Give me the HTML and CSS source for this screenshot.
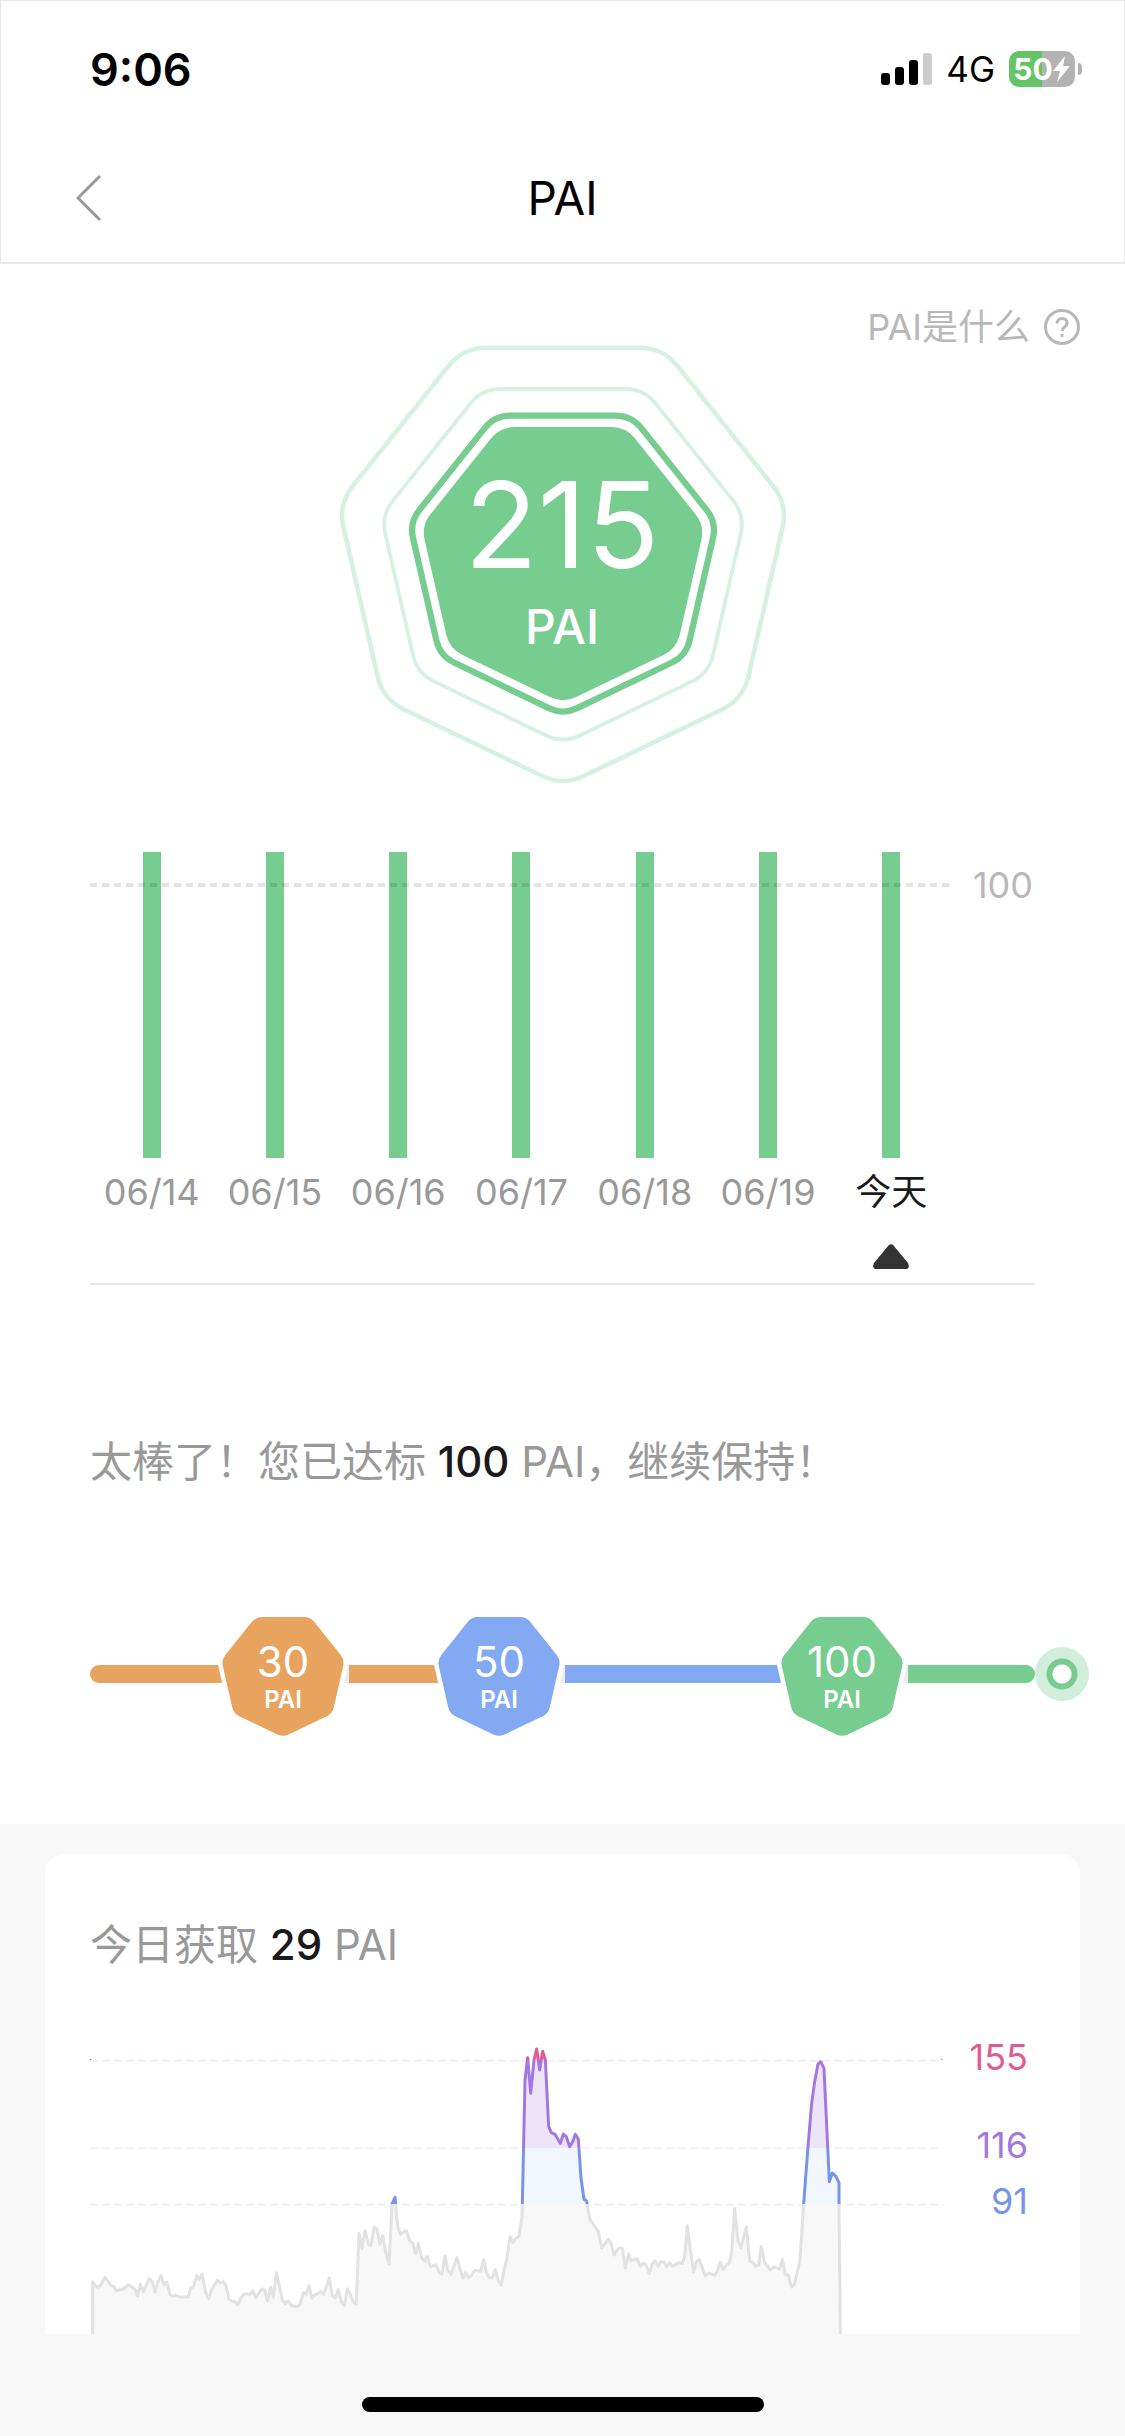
FILE: index.html
```html
<!DOCTYPE html>
<html lang="zh-CN">
<head>
<meta charset="utf-8">
<meta name="viewport" content="width=device-width, initial-scale=1">
<title>PAI</title>
<link rel="stylesheet" href="styles.css">
</head>
<body>
<svg class="defs" aria-hidden="true">
  <defs>
    <path id="hepta" d="M-33.39-90.1H33.39A20.8 20.8 0 0 1 49.62-82.28L91.26-30.07A20.8 20.8 0 0 1 95.27-12.5L80.4 52.6A20.8 20.8 0 0 1 69.17 66.69L9.01 95.66A20.8 20.8 0 0 1-9.01 95.66L-69.17 66.69A20.8 20.8 0 0 1-80.4 52.6L-95.27-12.5A20.8 20.8 0 0 1-91.26-30.07L-49.62-82.28A20.8 20.8 0 0 1-33.39-90.1Z"/>
  </defs>
</svg>

<header class="header">
  <div class="status">
    <span class="status-time">9:06</span>
    <div class="status-icons">
      <svg class="signal" viewBox="0 0 51 32" aria-hidden="true">
        <rect x="0" y="20" width="9" height="12" rx="3"/>
        <rect x="14" y="14" width="9" height="18" rx="3"/>
        <rect x="28" y="7" width="9" height="25" rx="3"/>
        <rect class="signal-off" x="42" y="0" width="9" height="32" rx="3"/>
      </svg>
      <span class="network">4G</span>
      <div class="battery">
        <span class="battery-text">50</span>
        <svg class="bolt" viewBox="0 0 18 26" aria-hidden="true"><path d="M12 0L0 15h7l-3 11 13-16h-7z"/></svg>
      </div>
    </div>
  </div>
  <nav class="nav">
    <button class="back" type="button" aria-label="返回">
      <svg viewBox="0 0 26 46" aria-hidden="true"><path d="M24 1L2 23l22 22"/></svg>
    </button>
    <h1 class="title">PAI</h1>
  </nav>
</header>

<main>
  <section class="summary">
    <a class="help" href="#">
      <span>PAI是什么</span>
      <svg viewBox="0 0 36 36" aria-hidden="true">
        <circle cx="18" cy="18" r="16.500"/>
        <path d="M13 14.500c0-3 2.200-5 5.100-5s5 1.900 5 4.600c0 2.200-1.400 3.200-2.800 4.200-1.500 1-2.200 1.900-2.200 4"/>
        <path d="M18 25v3"/>
      </svg>
    </a>

    <svg class="hero" viewBox="0 0 446 440">
      <use class="ring ring-outer" href="#hepta" transform="translate(223 210.500) scale(2.305)"/>
      <use class="ring ring-middle" href="#hepta" transform="translate(223 212) scale(1.866)"/>
      <use class="ring ring-inner" href="#hepta" transform="translate(223 212.500) scale(1.575)"/>
      <use class="core" href="#hepta" transform="translate(223 213) scale(1.453)"/>
      <text class="hero-value" x="222" y="223">215</text>
      <text class="hero-unit" x="222" y="299">PAI</text>
    </svg>

    <div class="week">
      <ol class="days">
        <li><span class="bar"></span><span>06/14</span></li>
        <li><span class="bar"></span><span>06/15</span></li>
        <li><span class="bar"></span><span>06/16</span></li>
        <li><span class="bar"></span><span>06/17</span></li>
        <li><span class="bar"></span><span>06/18</span></li>
        <li><span class="bar"></span><span>06/19</span></li>
        <li class="today"><span class="bar"></span><span>今天</span>
          <svg class="pointer" viewBox="0 0 36 25" aria-hidden="true"><path d="M15.500 1.500q2.500-2.500 5 0L35 19q2.500 6-3 6H4q-5.500 0-3-6z"/></svg>
        </li>
      </ol>
      <span class="goal">100</span>
      <span class="goal-line"></span>
    </div>

    <p class="message">太棒了！您已达标 <strong>100</strong> PAI，继续保持！</p>

    <div class="track">
      <span class="seg seg-30"></span>
      <span class="seg seg-50"></span>
      <span class="seg seg-100"></span>
      <span class="seg seg-max"></span>
      <svg class="badge badge-30" viewBox="-65 -65 130 136">
        <use href="#hepta" transform="scale(.632)"/>
        <text class="badge-value" y="3">30</text>
        <text class="badge-unit" y="34">PAI</text>
      </svg>
      <svg class="badge badge-50" viewBox="-65 -65 130 136">
        <use href="#hepta" transform="scale(.632)"/>
        <text class="badge-value" y="3">50</text>
        <text class="badge-unit" y="34">PAI</text>
      </svg>
      <svg class="badge badge-100" viewBox="-65 -65 130 136">
        <use href="#hepta" transform="scale(.632)"/>
        <text class="badge-value" y="3">100</text>
        <text class="badge-unit" y="34">PAI</text>
      </svg>
      <span class="marker"></span>
    </div>
  </section>

  <section class="details">
    <article class="card">
      <h2 class="card-title">今日获取 <strong>29</strong> PAI</h2>
      <div class="chart">
        <svg class="plot" viewBox="30 0 2559 912" preserveAspectRatio="none" role="img" aria-label="心率">
          <defs>
            <linearGradient id="zone-line" gradientUnits="userSpaceOnUse" x1="0" y1="0" x2="0" y2="1000">
              <stop offset=".089" stop-color="#e05c94"/><stop offset=".089" stop-color="#a377e0"/>
              <stop offset=".353" stop-color="#a377e0"/><stop offset=".353" stop-color="#7694e8"/>
              <stop offset=".522" stop-color="#7694e8"/><stop offset=".522" stop-color="#e2e2e2"/>
            </linearGradient>
            <linearGradient id="zone-fill" gradientUnits="userSpaceOnUse" x1="0" y1="0" x2="0" y2="1000">
              <stop offset=".089" stop-color="#fbe3ec"/><stop offset=".089" stop-color="#eee4f9"/>
              <stop offset=".353" stop-color="#eee4f9"/><stop offset=".353" stop-color="#f2f6fe"/>
              <stop offset=".522" stop-color="#f2f6fe"/><stop offset=".522" stop-color="#f8f8f8"/>
            </linearGradient>
          </defs>
          <path class="grid grid-155" d="M30 92H2589"/>
          <path class="grid grid-116" d="M30 355H2589"/>
          <path class="grid grid-91" d="M30 524H2589"/>
          <path class="grid-ends" d="M30 88h4M2583 88h4"/>
          <polyline class="rate" points="38,920 38,755 46,768 56,772 64,763 74,742 83,752 92,766 102,770 110,783 120,779 130,777 145,764 156,772 164,776 173,798 181,763 190,786 199,765 208,745 217,756 225,786 234,756 243,736 252,765 260,756 270,793 278,799 287,796 297,800 324,801 332,775 341,769 350,737 358,748 367,732 376,784 386,807 394,780 412,751 420,758 431,755 438,768 447,808 456,813 466,817 474,824 483,803 491,793 500,791 509,794 518,782 527,803 536,791 545,777 554,780 563,813 572,771 580,802 589,728 598,766 607,811 616,821 625,812 633,826 651,830 660,824 670,788 678,793 687,767 696,805 704,795 713,792 722,784 731,793 739,770 748,744 757,798 766,804 775,779 784,816 793,826 802,776 811,794 820,817 829,822 837,610 846,655 855,602 865,642 873,647 882,592 891,597 900,643 908,617 917,665 927,702 936,522 945,502 947,522 950,560 954,594 962,613 972,605 980,604 989,632 998,640 1007,672 1015,640 1025,684 1034,694 1042,680 1051,710 1068,704 1077,726 1086,733 1095,678 1104,722 1113,733 1122,708 1131,683 1140,717 1149,745 1157,728 1166,744 1175,736 1184,721 1202,724 1211,689 1219,727 1228,743 1237,744 1246,718 1254,750 1264,766 1272,720 1281,685 1290,620 1299,638 1308,625 1317,618 1326,560 1327,522 1335,150 1343,83 1352,190 1362,90 1370,57 1379,120 1388,64 1396,90 1406,290 1414,308 1425,313 1441,340 1450,312 1459,320 1469,350 1478,335 1486,313 1495,328 1503,445 1512,508 1520,513 1528,565 1555,605 1565,654 1585,628 1593,640 1602,675 1610,662 1619,653 1627,655 1636,714 1646,672 1653,692 1671,686 1681,709 1690,699 1698,705 1708,731 1716,704 1725,692 1734,709 1742,695 1752,696 1760,710 1769,698 1777,709 1796,698 1806,701 1814,680 1822,587 1831,661 1841,726 1849,695 1858,689 1866,712 1876,737 1886,729 1904,736 1911,725 1921,697 1930,719 1939,705 1948,698 1955,668 1964,536 1974,634 1983,652 1999,591 2009,694 2017,696 2026,708 2036,705 2044,649 2053,696 2071,720 2081,711 2099,717 2107,688 2116,733 2125,735 2134,771 2143,764 2160,690 2171,522 2184,350 2195,220 2204,155 2214,102 2222,95 2232,115 2243,350 2248,455 2257,429 2267,438 2277,458 2277,522 2281,920"/>
        </svg>
        <div class="zones">
          <span class="zone-155">155</span>
          <span class="zone-116">116</span>
          <span class="zone-91">91</span>
        </div>
      </div>
    </article>
  </section>
</main>

<footer class="footer"><span class="home-bar"></span></footer>
</body>
</html>
```

FILE: styles.css
```css
* {
  box-sizing: border-box;
}

:root {
  --green: #77cc8f;
  --orange: #e8a45f;
  --blue: #82a9f1;
  --pad: 90px;
}

body {
  margin: 0;
  background: #f8f8f8;
  color: #999;
  font-family: Inter, "Noto Sans CJK SC", sans-serif;
}

svg {
  display: block;
}

.defs {
  position: absolute;
  width: 0;
  height: 0;
}

/* Header */
.header {
  padding-bottom: 3px;
  border: 1px solid #e8e8e8;
  border-bottom-width: 2px;
  background: #fff;
  color: #000;
}

.status {
  display: flex;
  align-items: center;
  justify-content: space-between;
  height: 136px;
  padding: 0 49px 0 89px;
}

.status-time {
  font-size: 45px;
  font-weight: 600;
}

.status-icons {
  display: flex;
  align-items: center;
  gap: 14px;
}

.signal {
  width: 51px;
  height: 32px;
}

.signal-off {
  fill: #ccc;
}

.network {
  font-size: 35px;
  font-weight: 400;
}

.battery {
  display: flex;
  align-items: center;
  justify-content: center;
  position: relative;
  width: 66px;
  height: 36px;
  border-radius: 10px;
  background: linear-gradient(90deg, #65c466 50%, #b3b3b3 50%);
}

/* Terminal at the right end of the battery */
.battery::after {
  content: "";
  position: absolute;
  top: 12px;
  right: -7px;
  width: 4px;
  height: 12px;
  border-radius: 0 6px 6px 0;
  background: #b3b3b3;
}

.battery-text {
  color: #fff;
  font-size: 30px;
  font-weight: 700;
  line-height: 36px;
}

.bolt {
  width: 18px;
  height: 26px;
  fill: #fff;
}

.nav {
  display: grid;
  grid-template-columns: 1fr auto 1fr;
  align-items: center;
  height: 122px;
  padding: 0 75px;
}

.back {
  justify-self: start;
  padding: 0;
  border: 0;
  background: none;
}

.back svg {
  width: 26px;
  height: 46px;
  fill: none;
  stroke: #999;
  stroke-width: 3px;
}

.title {
  margin: 0;
  font-size: 46px;
  font-weight: 400;
}

/* Summary */
.summary {
  padding: 45px var(--pad) 141px;
  background: #fff;
}

.help {
  display: flex;
  align-items: center;
  justify-content: flex-end;
  gap: 14px;
  margin-right: -45px;
  color: #b8b8b8;
  font-size: 36px;
  line-height: 36px;
  text-decoration: none;
}

.help svg {
  width: 36px;
  height: 36px;
  fill: none;
  stroke: currentColor;
  stroke-width: 3px;
}

.hero {
  width: 446px;
  height: 440px;
  margin: 0 auto;
  text-anchor: middle;
}

.ring {
  fill: none;
  stroke: #d5f1df;
  stroke-width: 2px;
}

.ring-inner {
  stroke: var(--green);
  stroke-width: 4px;
}

.core {
  fill: var(--green);
}

.hero-value {
  fill: #fff;
  font-size: 120px;
  font-weight: 400;
}

.hero-unit {
  fill: #fff;
  font-size: 48px;
  font-weight: 500;
}

.week {
  display: grid;
  grid-template-columns: 1fr 82px;
  position: relative;
  margin-top: 67px;
  padding-bottom: 14px;
  border-bottom: 2px solid #e8e8e8;
  font-size: 36px;
  line-height: 44px;
}

.days {
  display: grid;
  grid-template-columns: repeat(7, 1fr);
  margin: 0;
  padding: 0;
  list-style: none;
}

.days li {
  display: flex;
  flex-direction: column;
  align-items: center;
  gap: 12px;
}

.bar {
  width: 18px;
  height: 306px;
  background: var(--green);
}

.days .today {
  color: #1a1a1a;
}

.pointer {
  width: 36px;
  height: 25px;
  margin-top: 18px;
  fill: #333;
}

.goal {
  padding: 11px 2px 0 0;
  color: #b8b8b8;
  text-align: right;
}

.goal-line {
  position: absolute;
  top: 31px;
  left: 0;
  right: 84px;
  height: 4px;
  background: repeating-linear-gradient(90deg, rgb(0 0 0 / 11%) 0 7px, transparent 7px 12px);
}

.message,
.card-title {
  margin: 147px 0 0;
  font-size: 42px;
  font-weight: 400;
  line-height: 60px;
}

.message strong,
.card-title strong {
  color: #1a1a1a;
  font-weight: 500;
}

/* Milestones */
.track {
  display: grid;
  grid-template-columns: 193fr 66fr 150fr 66fr 277fr 66fr 127fr;
  position: relative;
  height: 18px;
  margin-top: 173px;
  border-radius: 9px;
  background: #eee;
}

.seg-30 {
  grid-column: 1;
  border-radius: 9px 0 0 9px;
  background: var(--orange);
}

.seg-50 {
  grid-column: 3;
  background: var(--orange);
}

.seg-100 {
  grid-column: 5;
  background: var(--blue);
}

.seg-max {
  grid-column: 7;
  border-radius: 0 9px 9px 0;
  background: var(--green);
}

.badge {
  position: absolute;
  top: -56px;
  width: 130px;
  height: 136px;
  margin-left: -65px;
  stroke: #fff;
  stroke-width: 14px;
  paint-order: stroke;
  text-anchor: middle;
}

.badge text {
  fill: #fff;
  stroke: none;
}

.badge-30 {
  left: 20.4%;
  fill: var(--orange);
}

.badge-50 {
  left: 43.3%;
  fill: var(--blue);
}

.badge-100 {
  left: 79.6%;
  fill: var(--green);
}

.badge-value {
  font-size: 42px;
  font-weight: 400;
}

.badge-unit {
  font-size: 24px;
  font-weight: 600;
}

.marker {
  position: absolute;
  top: -18px;
  left: 100%;
  width: 54px;
  height: 54px;
  border-radius: 50%;
  background: radial-gradient(circle, #fff 9px, var(--green) 10px 15px, #d1eedc 16px);
}

/* Details */
.details {
  padding: 30px 45px 0;
}

.card {
  padding: 61px 45px 0;
  border-radius: 20px 20px 0 0;
  background: #fff;
}

.card-title {
  margin: 0;
}

.chart {
  display: grid;
  grid-template-columns: 1fr 92px;
  margin-top: 55px;
}

.plot {
  width: 100%;
  height: 304px;
}

.rate {
  fill: url(#zone-fill);
  stroke: url(#zone-line);
  stroke-width: 9px;
  stroke-linejoin: round;
}

.grid {
  fill: none;
  stroke-width: 6px;
  stroke-dasharray: 24 12;
}

.grid-155 {
  stroke: #f8edf1;
}

.grid-116 {
  stroke: #f2f0fa;
}

.grid-91 {
  stroke: #eef1fb;
}

.grid-ends {
  stroke: #999;
  stroke-width: 4px;
}

.zones {
  display: grid;
  grid-template-rows: 88px 56px 1fr;
  padding: 5px 7px 0 0;
  font-size: 36px;
  line-height: 44px;
  text-align: right;
}

.zone-155 {
  color: #e05c94;
}

.zone-116 {
  color: #a377e0;
}

.zone-91 {
  color: #7694e8;
}

.footer {
  padding: 63px 0 24px;
}

.home-bar {
  display: block;
  width: 402px;
  height: 15px;
  margin: 0 auto;
  border-radius: 8px;
  background: #000;
}
```
